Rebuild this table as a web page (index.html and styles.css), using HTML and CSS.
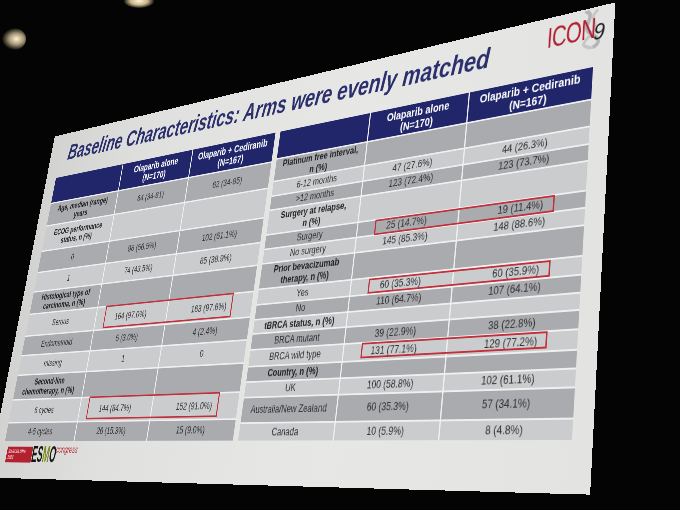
FILE: index.html
```html
<!DOCTYPE html>
<html lang="en">
<head>
<meta charset="utf-8">
<title>Baseline Characteristics</title>
<link rel="stylesheet" href="styles.css">
</head>
<body>
<div class="photo">
  <div class="light light-a"></div>
  <div class="light light-b"></div>
  <div class="slide">
    <div class="slide-top">
      <h1 class="title">Baseline Characteristics: Arms were evenly matched</h1>
      <div class="icon9">
        <svg class="helix" width="90" height="48" viewBox="0 0 90 48">
          <path d="M56 0 C 74 8, 50 18, 64 28 S 82 42, 66 48" fill="none" stroke="#b4b4b6" stroke-width="5"/>
          <path d="M74 2 C 58 10, 80 20, 66 30 S 52 42, 70 48" fill="none" stroke="#c6c6c8" stroke-width="4"/>
        </svg>
        <span class="icon-word">ICON</span>
        <span class="icon-nine">9</span>
      </div>
    </div>

    <div class="tables">
      <div class="tbl tbl-left">
        <div class="c h"></div>
        <div class="c h">Olaparib alone<br>(N=170)</div>
        <div class="c h">Olaparib + Cediranib<br>(N=167)</div>

        <div class="c d b">Age, median (range)<br>years</div>
        <div class="c d">64 (34-81)</div>
        <div class="c d">62 (34-85)</div>

        <div class="c l b">ECOG performance<br>status, n (%)</div>
        <div class="c l"></div>
        <div class="c l"></div>

        <div class="c d">0</div>
        <div class="c d">96 (56.5%)</div>
        <div class="c d">102 (61.1%)</div>

        <div class="c l">1</div>
        <div class="c l">74 (43.5%)</div>
        <div class="c l">65 (38.9%)</div>

        <div class="c d b">Histological type of<br>carcinoma, n (%)</div>
        <div class="c d"></div>
        <div class="c d"></div>

        <div class="c l">Serous</div>
        <div class="c l">164 (97.0%)</div>
        <div class="c l">163 (97.6%)</div>

        <div class="c d">Endometrioid</div>
        <div class="c d">5 (3.0%)</div>
        <div class="c d">4 (2.4%)</div>

        <div class="c l">missing</div>
        <div class="c l">1</div>
        <div class="c l">0</div>

        <div class="c d b">Second-line<br>chemotherapy, n (%)</div>
        <div class="c d"></div>
        <div class="c d"></div>

        <div class="c l">6 cycles</div>
        <div class="c l">144 (84.7%)</div>
        <div class="c l">152 (91.0%)</div>

        <div class="c d">4-5 cycles</div>
        <div class="c d">26 (15.3%)</div>
        <div class="c d">15 (9.0%)</div>

        <div class="hl hl-l1"></div>
        <div class="hl hl-l2"></div>
      </div>

      <div class="tbl tbl-right">
        <div class="c h"></div>
        <div class="c h">Olaparib alone<br>(N=170)</div>
        <div class="c h">Olaparib + Cediranib<br>(N=167)</div>

        <div class="c d b">Platinum free interval,<br>n (%)</div>
        <div class="c d"></div>
        <div class="c d"></div>

        <div class="c l">6-12 months</div>
        <div class="c l">47 (27.6%)</div>
        <div class="c l">44 (26.3%)</div>

        <div class="c d">&gt;12 months</div>
        <div class="c d">123 (72.4%)</div>
        <div class="c d">123 (73.7%)</div>

        <div class="c l b">Surgery at relapse,<br>n (%)</div>
        <div class="c l"></div>
        <div class="c l"></div>

        <div class="c d">Surgery</div>
        <div class="c d">25 (14.7%)</div>
        <div class="c d">19 (11.4%)</div>

        <div class="c l">No surgery</div>
        <div class="c l">145 (85.3%)</div>
        <div class="c l">148 (88.6%)</div>

        <div class="c d b">Prior bevacizumab<br>therapy, n (%)</div>
        <div class="c d"></div>
        <div class="c d"></div>

        <div class="c l">Yes</div>
        <div class="c l">60 (35.3%)</div>
        <div class="c l">60 (35.9%)</div>

        <div class="c d">No</div>
        <div class="c d">110 (64.7%)</div>
        <div class="c d">107 (64.1%)</div>

        <div class="c l b">tBRCA status, n (%)</div>
        <div class="c l"></div>
        <div class="c l"></div>

        <div class="c d">BRCA mutant</div>
        <div class="c d">39 (22.9%)</div>
        <div class="c d">38 (22.8%)</div>

        <div class="c l">BRCA wild type</div>
        <div class="c l">131 (77.1%)</div>
        <div class="c l">129 (77.2%)</div>

        <div class="c d b">Country, n (%)</div>
        <div class="c d"></div>
        <div class="c d"></div>

        <div class="c l">UK</div>
        <div class="c l">100 (58.8%)</div>
        <div class="c l">102 (61.1%)</div>

        <div class="c d">Australia/New Zealand</div>
        <div class="c d">60 (35.3%)</div>
        <div class="c d">57 (34.1%)</div>

        <div class="c l">Canada</div>
        <div class="c l">10 (5.9%)</div>
        <div class="c l">8 (4.8%)</div>

        <div class="hl hl-r1"></div>
        <div class="hl hl-r2"></div>
        <div class="hl hl-r3"></div>
      </div>
    </div>

    <div class="esmo">
      <div class="esmo-badge">BARCELONA<br>2022</div>
      <div class="esmo-word"><span class="esmo-letters">ES<span class="esmo-m">M</span>O</span></div>
      <div class="esmo-congress">congress</div>
    </div>
  </div>
</div>
</body>
</html>
```

FILE: styles.css
```css
* {
  box-sizing: border-box;
  margin: 0;
  padding: 0;
}

html,
body {
  width: 680px;
  height: 510px;
  overflow: hidden;
  background: #030303;
}

.photo {
  position: relative;
  width: 680px;
  height: 510px;
  overflow: hidden;
  background: #040404;
}

.light {
  position: absolute;
  border-radius: 50%;
}

.light-a {
  left: 124px;
  top: -6px;
  width: 30px;
  height: 14px;
  background: radial-gradient(ellipse at center, #fff6dc 0%, #c9b68a 40%, rgba(60, 50, 30, 0) 75%);
}

.light-b {
  left: 2px;
  top: 28px;
  width: 24px;
  height: 22px;
  background: radial-gradient(ellipse at 60% 50%, #fff3d2 0%, #a99a7a 35%, rgba(40, 35, 25, 0) 72%);
}

.slide {
  position: absolute;
  left: 0;
  top: 0;
  width: 1093px;
  height: 524px;
  transform-origin: 0 0;
  transform: matrix3d(0.348096, -0.125740, 0, -0.000283731,
                      -0.1283, 0.587125, 0, -0.000159598,
                      0, 0, 1, 0,
                      55.839, 139.122, 0, 1.0191518);
  background: linear-gradient(90deg, #d2d3d0 0%, #e0e1df 25%, #e7e8e6 65%, #e3e4e2 100%);
  padding: 0 26px 0 27px;
  display: flex;
  flex-direction: column;
  font-family: "Liberation Sans", Arial, sans-serif;
}

.slide-top {
  height: 72px;
  display: flex;
  align-items: flex-start;
}

.title {
  margin: 16px 0 0 21px;
  font-size: 34.5px;
  line-height: 34.5px;
  font-weight: 700;
  font-style: italic;
  color: #2b2f6c;
  white-space: nowrap;
}

.icon9 {
  position: relative;
  margin: 2px -19px 0 auto;
  width: 90px;
  height: 48px;
  flex: none;
}

.helix {
  position: absolute;
  left: 0;
  top: 0;
}

.icon-word {
  position: absolute;
  left: 3px;
  top: 5px;
  font-size: 35px;
  line-height: 35px;
  color: #b21f30;
  letter-spacing: -1px;
  transform: scaleX(0.82);
  transform-origin: 0 0;
  white-space: nowrap;
}

.icon-nine {
  position: absolute;
  left: 69px;
  top: 15px;
  font-size: 28px;
  line-height: 28px;
  color: #1c1c1c;
  font-style: italic;
}

.tables {
  display: grid;
  grid-template-columns: 515px 515px;
  column-gap: 10px;
  height: 400px;
  flex: none;
}

.tbl {
  position: relative;
  display: grid;
  gap: 2px;
  background: #f0f0f0;
}

.tbl-left {
  grid-template-columns: 174px 163px 174px;
  grid-template-rows: 40px 34px 38px 31px 28px 32px 31px 27px 27px 34px 31px 25px;
}

.tbl-right {
  grid-template-columns: 168px 163px 180px;
  grid-template-rows: 37px 29px 18px 17px 31px 17px 17px 31px 18px 17px 16px 18px 19px 17px 17px 29px 20px;
}

.c {
  display: flex;
  align-items: center;
  justify-content: center;
  text-align: center;
  font-size: 13.5px;
  line-height: 14.5px;
  color: #2f2f33;
  white-space: nowrap;
}

.h {
  background: #21266b;
  color: #ffffff;
  font-weight: 700;
  font-size: 15px;
  line-height: 16px;
}

.d {
  background: #aaabaf;
}

.l {
  background: #cbccce;
}

.b {
  font-weight: 700;
  color: #1f1f22;
}

.hl {
  position: absolute;
  border: 2px solid #c22f3a;
}

.hl-l1 {
  left: 196px;
  top: 213px;
  width: 280px;
  height: 32px;
}

.hl-l2 {
  left: 194px;
  top: 340px;
  width: 283px;
  height: 31px;
}

.hl-r1 {
  left: 199px;
  top: 141px;
  width: 274px;
  height: 19px;
}

.hl-r2 {
  left: 199px;
  top: 213px;
  width: 274px;
  height: 18px;
}

.hl-r3 {
  left: 199px;
  top: 289px;
  width: 276px;
  height: 18px;
}

.esmo {
  margin: 6px 0 0 11px;
  display: flex;
  align-items: flex-start;
  height: 26px;
}

.esmo-badge {
  width: 66px;
  height: 22px;
  margin-top: 2px;
  padding: 3px 4px;
  background: #b3202e;
  color: #f2c9cc;
  font-size: 7px;
  line-height: 8px;
  font-weight: 700;
}

.esmo-word {
  width: 58px;
  height: 24px;
  margin-top: 1px;
  overflow: visible;
}

.esmo-letters {
  display: inline-block;
  font-size: 31px;
  line-height: 24px;
  font-weight: 700;
  color: #141414;
  transform: scaleX(0.66);
  transform-origin: 0 0;
  white-space: nowrap;
}

.esmo-m {
  color: #7d8a1c;
}

.esmo-congress {
  font-size: 13px;
  line-height: 12px;
  font-style: italic;
  color: #b3202e;
}
```
